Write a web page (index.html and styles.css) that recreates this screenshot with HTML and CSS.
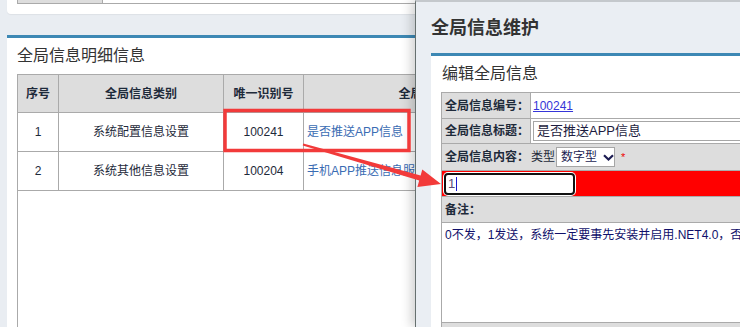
FILE: index.html
```html
<!DOCTYPE html>
<html lang="zh-CN">
<head>
<meta charset="utf-8">
<title>全局信息维护</title>
<link rel="stylesheet" href="styles.css">
</head>
<body>
<div class="page">
  <div class="card card-top">
    <div class="top-row">
      <div class="top-cell label"></div>
      <div class="top-cell"></div>
    </div>
  </div>
  <div class="card card-main">
    <div class="card-title">全局信息明细信息</div>
    <div class="grid-wrap">
      <div class="grid">
        <div class="th">序号</div>
        <div class="th">全局信息类别</div>
        <div class="th">唯一识别号</div>
        <div class="th">全局信息标题</div>
        <div class="th">操作</div>
        <div class="td">1</div>
        <div class="td">系统配置信息设置</div>
        <div class="td">100241</div>
        <div class="td left"><a class="link">是否推送APP信息</a></div>
        <div class="td"></div>
        <div class="td">2</div>
        <div class="td">系统其他信息设置</div>
        <div class="td">100204</div>
        <div class="td left"><a class="link">手机APP推送信息服务器地址</a></div>
        <div class="td"></div>
      </div>
    </div>
  </div>
</div>

<div class="dialog">
  <h1 class="dialog-title">全局信息维护</h1>
  <div class="card card-edit">
    <div class="card-title">编辑全局信息</div>
    <div class="form">
      <div class="frow r1">
        <div class="flabel">全局信息编号：</div>
        <div class="fval"><a class="id-link">100241</a></div>
      </div>
      <div class="frow r2">
        <div class="flabel">全局信息标题：</div>
        <div class="fval"><div class="text-input">是否推送APP信息</div></div>
      </div>
      <div class="frow r3 gray">
        <span class="blabel">全局信息内容：</span>
        <span class="type-label">类型</span>
        <span class="select">数字型<svg class="chev" width="11" height="7" viewBox="0 0 11 7"><path d="M1 1.2 L5.5 5.5 L10 1.2" fill="none" stroke="#1c1c52" stroke-width="2.2"/></svg></span>
        <span class="req">*</span>
      </div>
      <div class="frow r4 red">
        <div class="focus-input"><span class="typed">1</span></div>
      </div>
      <div class="frow r5 gray"><span class="blabel">备注：</span></div>
      <div class="frow r6">
        <p class="note">0不发，1发送，系统一定要事先安装并启用.NET4.0，否则无法推送</p>
      </div>
      <div class="frow r7 gray"></div>
    </div>
  </div>
</div>

<svg class="annot" width="740" height="327" viewBox="0 0 740 327">
  <rect x="225" y="110.5" width="184" height="40" fill="none" stroke="#f23a3a" stroke-width="3.5"/>
  <polygon points="302.7,145.6 419.2,180.4 417.4,186.9 441,184 422.3,169.4 420.6,175.6 303.3,143.6" fill="#f23a3a"/>
</svg>
</body>
</html>
```
FILE: styles.css
```css
* { box-sizing: border-box; }
html, body { margin: 0; padding: 0; }
body {
  width: 740px;
  height: 327px;
  overflow: hidden;
  position: relative;
  background: #e9edf2;
  font-family: "Liberation Sans", "Noto Sans CJK SC", sans-serif;
  font-size: 12px;
  color: #1e2a3a;
}
.page { padding: 0 7px; }
.card { background: #fff; }

.card-top {
  height: 14px;
  padding: 0 10px;
  border-radius: 0 0 4px 4px;
  box-shadow: 0 1px 1px rgba(0,0,0,0.05);
}
.top-row {
  display: flex;
  height: 4px;
  border-bottom: 1px solid #aaa;
}
.top-cell { flex: 1; }
.top-cell.label {
  flex: 0 0 86px;
  background: #ddd;
  border-left: 1px solid #aaa;
  border-right: 1px solid #aaa;
}

.card-main {
  margin-top: 21px;
  border-top: 3px solid #3d88b4;
  height: 292px;
  overflow: hidden;
}
.card-title {
  height: 36px;
  line-height: 36px;
  padding-left: 10px;
  font-size: 16px;
  color: #333;
}
.grid-wrap {
  margin-left: 10px;
  border: 1px solid #aaa;
  border-bottom: none;
  height: 253px;
  overflow: hidden;
}
.grid {
  display: grid;
  grid-template-columns: 41px 165px 80px 262px 200px;
  grid-template-rows: 38px 39px 39px;
}
.th, .td {
  border-right: 1px solid #aaa;
  border-bottom: 1px solid #aaa;
  display: flex;
  align-items: center;
  justify-content: center;
  white-space: nowrap;
  overflow: hidden;
  line-height: 16px;
}
.th { background: #ddd; font-weight: bold; color: #1e2a3a; }
.td.left { justify-content: flex-start; padding-left: 3px; }
.link { color: #3a6cb3; text-decoration: none; }

.dialog {
  position: absolute;
  top: 0;
  left: 415px;
  right: 0;
  bottom: 0;
  background: #eaeef3;
  border-left: 1px solid #66706f;
  border-top: 2px solid #c4c8cc;
  box-shadow: -4px 0 10px rgba(0,0,0,0.18);
  padding-left: 15px;
  overflow: hidden;
}
.dialog-title {
  margin: 0;
  height: 51px;
  line-height: 52px;
  font-size: 18px;
  font-weight: bold;
  color: #333;
}
.card-edit {
  width: 310px;
  height: 274px;
  border-top: 3px solid #3d88b4;
  padding-left: 10px;
  overflow: hidden;
}
.card-edit .card-title { padding-left: 1px; }
.form {
  border-top: 1px solid #aaa;
  border-left: 1px solid #aaa;
  width: 320px;
}
.frow {
  display: flex;
  align-items: center;
  border-bottom: 1px solid #aaa;
  white-space: nowrap;
  line-height: 16px;
  overflow: hidden;
}
.frow.gray { background: #ddd; padding-left: 3px; }
.frow.red { background: #ff0000; }
.r1 { height: 26px; }
.r2 { height: 25px; }
.r3 { height: 27px; }
.r4 { height: 26px; }
.r5 { height: 26px; }
.r6 { height: 100px; align-items: flex-start; }
.r7 { height: 4px; border-bottom: none; }

.flabel {
  flex: 0 0 89px;
  align-self: stretch;
  display: flex;
  align-items: center;
  padding-left: 3px;
  background: #ddd;
  border-right: 1px solid #aaa;
  font-weight: bold;
}
.blabel { font-weight: bold; }
.fval { flex: 1; display: flex; align-items: center; padding-left: 2px; }
.id-link { color: #3535d8; text-decoration: underline; }
.text-input {
  width: 230px;
  height: 20px;
  border: 1px solid #a6a6a6;
  background: #fff;
  padding-left: 3px;
  font-size: 13px;
  line-height: 18px;
  color: #1c1c40;
}
.type-label { margin-left: 2px; }
.select {
  display: inline-flex;
  align-items: center;
  height: 20px;
  width: 59px;
  margin-left: 1px;
  padding-left: 4px;
  border: 1px solid #a6a6a6;
  background: #fff;
  color: #1c1c52;
}
.chev { margin-left: 6px; }
.req { color: #e00; margin-left: 6px; font-size: 11px; }

.focus-input {
  margin-left: 2px;
  width: 131px;
  height: 22px;
  border: 2px solid #111;
  border-radius: 4px;
  background: #fff;
  box-shadow: 0 0 0 1px #fff;
  padding-left: 2px;
  font-size: 13px;
  line-height: 14px;
  color: #5a4a7a;
  display: flex;
  align-items: center;
}
.typed {
  padding-right: 1px;
  border-right: 1px solid #1a1ad0;
}
.note {
  margin: 0;
  padding: 3px 3px;
  line-height: 18px;
  color: #10106a;
}

.annot {
  position: absolute;
  left: 0;
  top: 0;
  pointer-events: none;
}
```
